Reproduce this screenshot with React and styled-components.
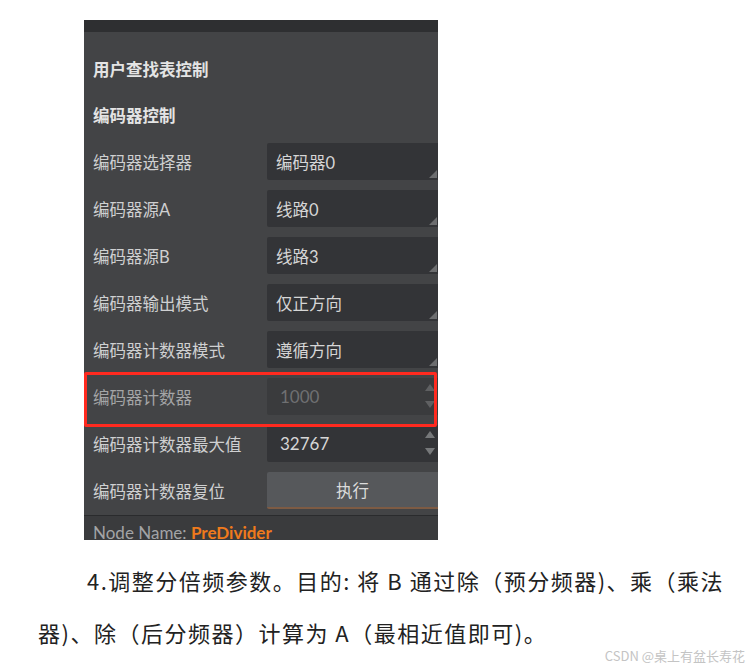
import React from "react";
import styled, { createGlobalStyle } from "styled-components";

const GlobalStyle = createGlobalStyle`
  html, body { margin: 0; padding: 0; background: #ffffff; }
  * { box-sizing: border-box; }
`;

const Page = styled.div`
  position: relative;
  width: 751px;
  height: 670px;
  padding-top: 20px;
  background: #ffffff;
  overflow: hidden;
`;

const Panel = styled.div`
  margin-left: 84px;
  width: 354px;
  height: 520px;
  background: #434446;
  overflow: hidden;
  display: flex;
  flex-direction: column;
  font-family: Lato, "Noto Sans CJK SC", sans-serif;
  font-size: 16.5px;
  color: #cfd0d1;
`;

const TopBar = styled.div`
  height: 12px;
  flex: none;
  background: #2e2f31;
`;

const Body = styled.div`
  padding-top: 14px;
  display: flex;
  flex-direction: column;
`;

const SectionHeader = styled.div`
  height: 46px;
  display: flex;
  align-items: center;
  padding-left: 9px;
  font-weight: 700;
  color: #e4e4e4;
`;

const Row = styled.div`
  position: relative;
  height: 47px;
  display: flex;
  align-items: center;
`;

const Label = styled.div`
  width: 183px;
  flex: none;
  padding-left: 9px;
  color: ${(p) => (p.$disabled ? "#a4a5a6" : "#cfd0d1")};
`;

const FieldBase = styled.div`
  position: relative;
  flex: 1;
  height: 37px;
  border-radius: 2px 0 0 2px;
  display: flex;
  align-items: center;
`;

const SelectBox = styled(FieldBase)`
  background: #333437;
  padding-left: 9px;
  color: #d6d6d6;
`;

const Grip = styled.svg`
  position: absolute;
  right: 1px;
  bottom: 2px;
  width: 8px;
  height: 8px;
`;

const SpinBox = styled(FieldBase)`
  background: ${(p) => (p.$disabled ? "#3a3b3d" : "#333437")};
  padding-left: 13px;
  color: ${(p) => (p.$disabled ? "#6f7072" : "#d6d6d6")};
  font-size: 17px;
`;

const Arrows = styled.div`
  position: absolute;
  right: 3px;
  top: 6px;
  bottom: 7px;
  display: flex;
  flex-direction: column;
  justify-content: space-between;
`;

const ActionButton = styled(FieldBase)`
  background: #56585b;
  border-bottom: 2px solid #7d5b44;
  justify-content: center;
  color: #dcdcdc;
`;

const Highlight = styled.div`
  position: absolute;
  left: 0;
  right: 1px;
  top: -1px;
  bottom: -7px;
  border: 3px solid #ff2a1f;
  border-radius: 2px;
  z-index: 2;
  pointer-events: none;
`;

const Footer = styled.div`
  margin-top: 1px;
  flex: 1;
  background: #3a3b3d;
  border-top: 1px solid #2a2b2d;
  padding: 6px 0 0 9px;
  font-size: 17px;
  line-height: 22px;
  color: #a3a4a6;
`;

const NodeName = styled.span`
  color: #f07a1c;
  font-weight: 700;
`;

const Article = styled.div`
  margin: 14px 0 0 38px;
  font-family: "Noto Sans CJK SC", "Noto Sans", sans-serif;
  font-size: 22px;
  letter-spacing: 1.5px;
  line-height: 52px;
  color: #222222;
  white-space: nowrap;
`;

const Line = styled.div`
  text-indent: ${(p) => (p.$indent ? "49px" : "0")};
`;

const Watermark = styled.div`
  position: absolute;
  right: 6px;
  bottom: 5px;
  font-family: "Noto Sans CJK SC", "Noto Sans", sans-serif;
  font-size: 13px;
  color: #c4c4c4;
`;

const GripIcon = () => (
  <Grip viewBox="0 0 8 8">
    <polygon points="8,0 8,8 0,8" fill="#6c6d6f" />
  </Grip>
);

const SpinArrows = ({ color }) => (
  <Arrows>
    <svg width="10" height="7" viewBox="0 0 10 7">
      <polygon points="5,0 10,7 0,7" fill={color} />
    </svg>
    <svg width="10" height="7" viewBox="0 0 10 7">
      <polygon points="0,0 10,0 5,7" fill={color} />
    </svg>
  </Arrows>
);

const selects = [
  ["编码器选择器", "编码器0"],
  ["编码器源A", "线路0"],
  ["编码器源B", "线路3"],
  ["编码器输出模式", "仅正方向"],
  ["编码器计数器模式", "遵循方向"],
];

export default function App() {
  return (
    <>
      <GlobalStyle />
      <Page>
        <Panel>
          <TopBar />
          <Body>
            <SectionHeader>用户查找表控制</SectionHeader>
            <SectionHeader>编码器控制</SectionHeader>
            {selects.map(([label, value]) => (
              <Row key={label}>
                <Label>{label}</Label>
                <SelectBox>
                  {value}
                  <GripIcon />
                </SelectBox>
              </Row>
            ))}
            <Row>
              <Label $disabled>编码器计数器</Label>
              <SpinBox $disabled>
                1000
                <SpinArrows color="#5f6062" />
              </SpinBox>
              <Highlight />
            </Row>
            <Row>
              <Label>编码器计数器最大值</Label>
              <SpinBox>
                32767
                <SpinArrows color="#76787a" />
              </SpinBox>
            </Row>
            <Row>
              <Label>编码器计数器复位</Label>
              <ActionButton>执行</ActionButton>
            </Row>
          </Body>
          <Footer>
            Node Name: <NodeName>PreDivider</NodeName>
          </Footer>
        </Panel>
        <Article>
          <Line $indent>4.调整分倍频参数。目的: 将 B 通过除（预分频器)、乘（乘法</Line>
          <Line>器)、除（后分频器）计算为 A（最相近值即可)。</Line>
        </Article>
        <Watermark>CSDN @桌上有盆长寿花</Watermark>
      </Page>
    </>
  );
}
